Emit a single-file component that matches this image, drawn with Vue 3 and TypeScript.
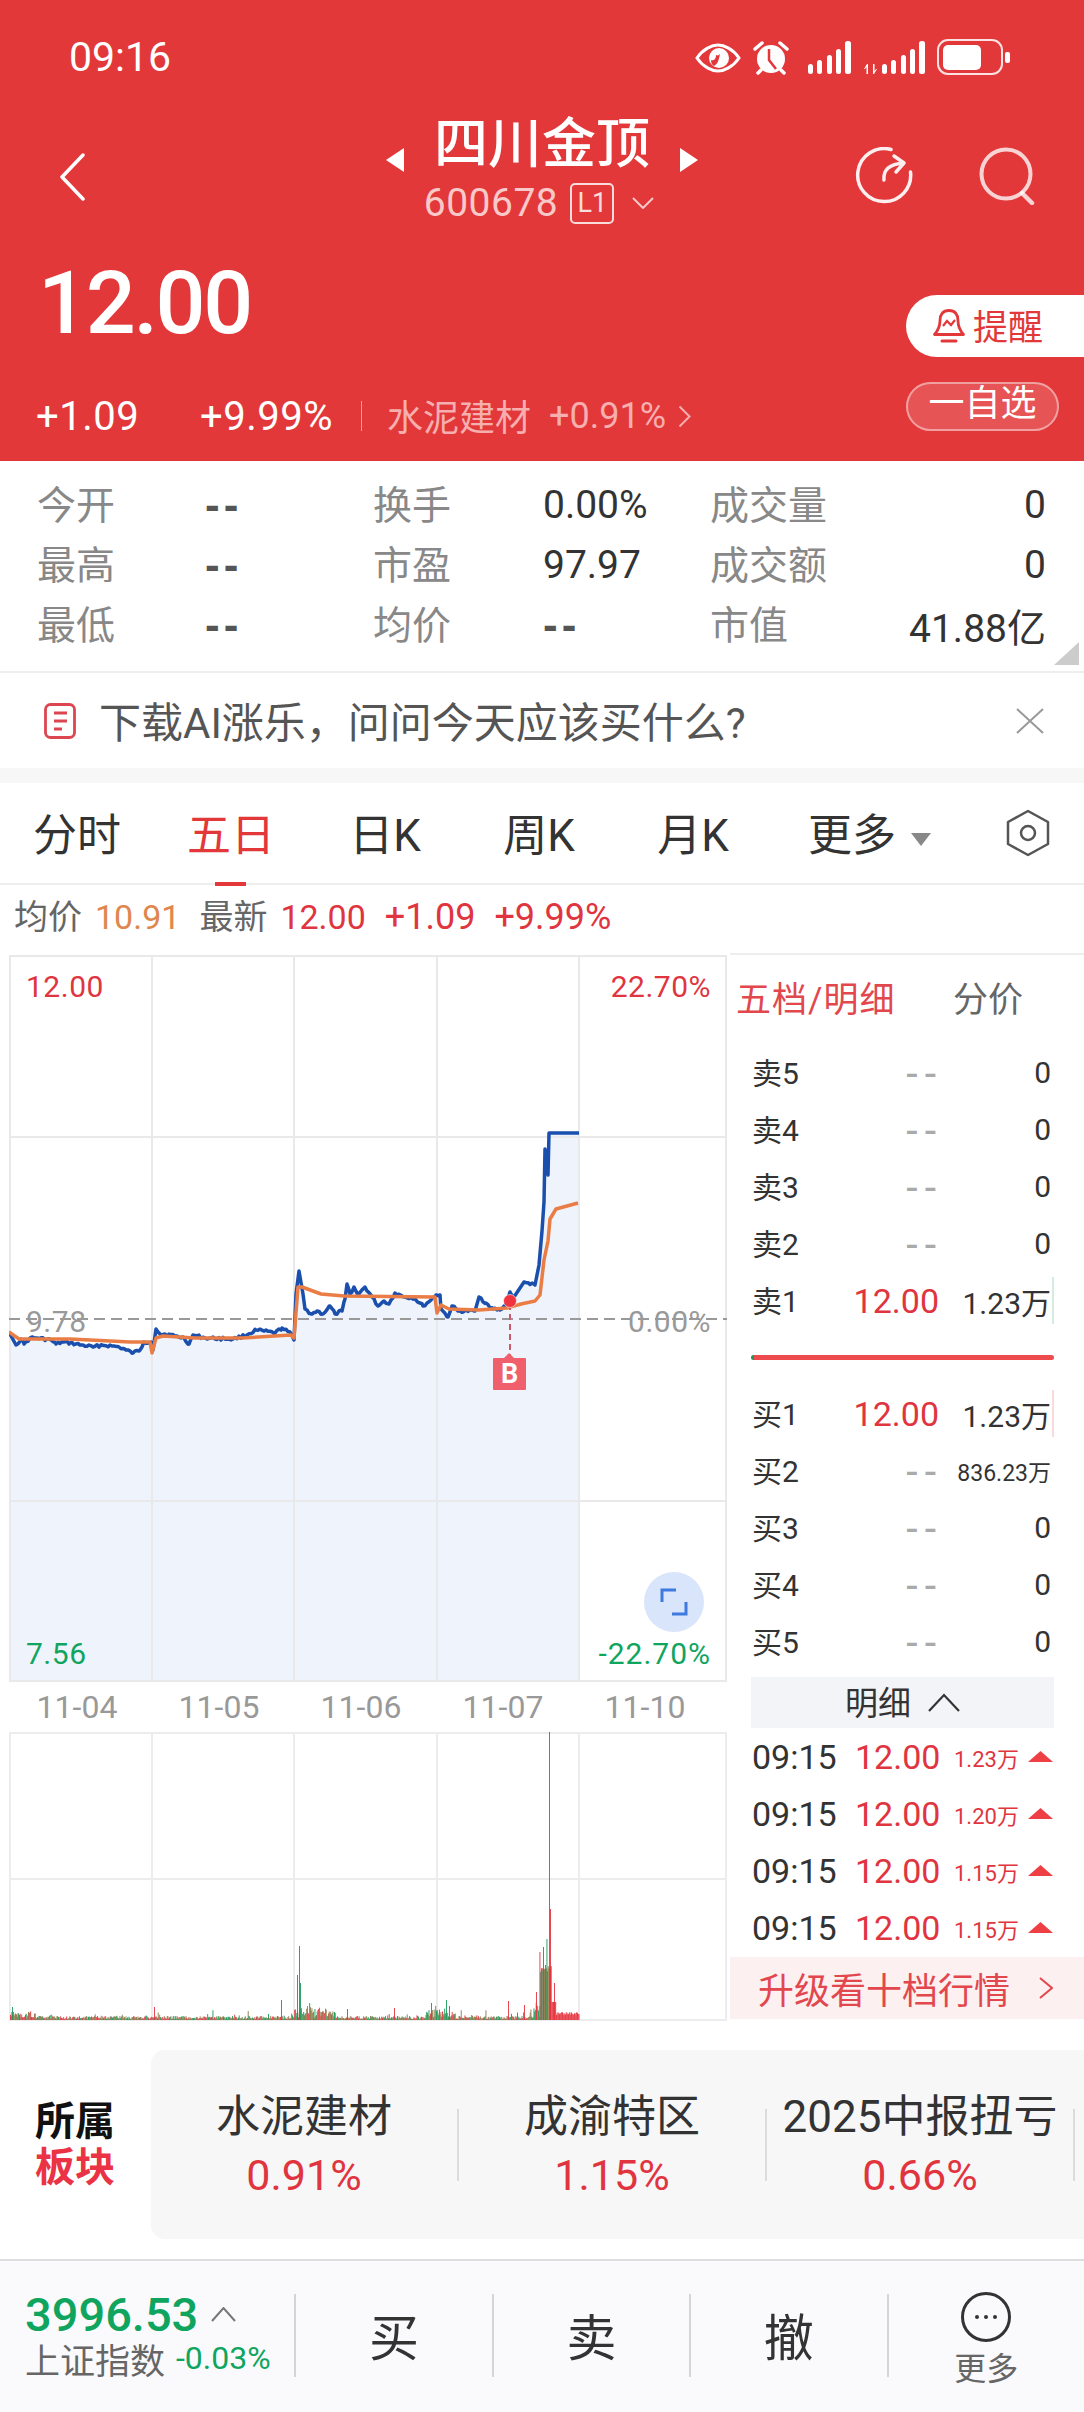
<script setup lang="ts">
interface Stat {
  label: string;
  value: string;
  dim?: boolean;
  right?: boolean;
}

interface Level {
  name: string;
  price: string;
  volume: string;
  small?: boolean;
}

interface Bar {
  x: number;
  h: number;
  color: string;
}

const stats: Stat[] = [
  { label: "今开", value: "--", dim: true },
  { label: "换手", value: "0.00%" },
  { label: "成交量", value: "0", right: true },
  { label: "最高", value: "--", dim: true },
  { label: "市盈", value: "97.97" },
  { label: "成交额", value: "0", right: true },
  { label: "最低", value: "--", dim: true },
  { label: "均价", value: "--", dim: true },
  { label: "市值", value: "41.88亿", right: true },
];

const asks: Level[] = [
  { name: "卖5", price: "--", volume: "0" },
  { name: "卖4", price: "--", volume: "0" },
  { name: "卖3", price: "--", volume: "0" },
  { name: "卖2", price: "--", volume: "0" },
  { name: "卖1", price: "12.00", volume: "1.23万" },
];

const bids: Level[] = [
  { name: "买1", price: "12.00", volume: "1.23万" },
  { name: "买2", price: "--", volume: "836.23万", small: true },
  { name: "买3", price: "--", volume: "0" },
  { name: "买4", price: "--", volume: "0" },
  { name: "买5", price: "--", volume: "0" },
];

const ticks = ["1.23万", "1.20万", "1.15万", "1.15万"];
const tabs = ["分时", "五日", "日K", "周K", "月K"];
const dates = ["11-04", "11-05", "11-06", "11-07", "11-10"];
const sectors = [
  { name: "水泥建材", pct: "0.91%" },
  { name: "成渝特区", pct: "1.15%" },
  { name: "2025中报扭亏", pct: "0.66%" },
];

// page coordinates, the svg viewBox starts at the chart's corner
const priceLine: number[][] = [
  [9, 1332], [16, 1345], [21, 1339], [24, 1344], [30, 1338], [37, 1338], [51, 1340], [56, 1344],
  [63, 1342], [70, 1343], [81, 1345], [93, 1347], [102, 1345], [112, 1346], [119, 1347], [126, 1350],
  [133, 1353], [140, 1350], [144, 1342], [151, 1342], [153, 1350], [156, 1329], [161, 1335], [165, 1334],
  [175, 1336], [184, 1338], [189, 1344], [193, 1335], [205, 1338], [233, 1339], [247, 1335], [256, 1330],
  [275, 1333], [282, 1328], [291, 1334], [294, 1340], [296, 1294], [299, 1271], [303, 1294], [305, 1309],
  [312, 1314], [317, 1311], [323, 1314], [330, 1306], [335, 1314], [342, 1311], [345, 1299], [347, 1284],
  [350, 1294], [354, 1287], [358, 1295], [365, 1287], [372, 1297], [378, 1306], [384, 1301], [389, 1304],
  [395, 1293], [405, 1297], [414, 1298], [423, 1306], [431, 1300], [436, 1295], [440, 1295], [441, 1309],
  [448, 1317], [452, 1306], [458, 1311], [475, 1311], [479, 1297], [486, 1303], [493, 1309], [500, 1310],
  [505, 1306], [510, 1292], [514, 1297], [524, 1282], [535, 1285], [539, 1265], [542, 1231], [544, 1202],
  [545, 1149], [548, 1175], [549, 1133], [579, 1133],
];

const avgLine: number[][] = [
  [9, 1332], [19, 1339], [70, 1339], [130, 1342], [150, 1342], [152, 1353], [156, 1338], [163, 1336],
  [195, 1338], [242, 1338], [291, 1335], [294, 1338], [298, 1287], [302, 1287], [321, 1294], [344, 1296],
  [435, 1297], [437, 1313], [441, 1305], [449, 1309], [479, 1310], [507, 1308], [521, 1304], [535, 1301],
  [540, 1295], [544, 1260], [548, 1241], [550, 1219], [556, 1209], [578, 1203],
];

let seed = 17;
const rand = () => {
  seed = (seed * 9301 + 49297) % 233280;
  return seed / 233280;
};

// the real line ticks every minute, so roughen the flat stretches
function roughen(pts: number[][]): number[][] {
  const out: number[][] = [];
  pts.forEach((p, i) => {
    const next = pts[i + 1];
    out.push(p);
    if (!next || p[0] >= 549 || Math.abs(next[1] - p[1]) > 12) return;
    for (let x = p[0] + 2; x < next[0]; x += 2) {
      const t = (x - p[0]) / (next[0] - p[0]);
      out.push([x, p[1] + (next[1] - p[1]) * t + (rand() - 0.5) * 3]);
    }
  });
  return out;
}

const toPoints = (pts: number[][]) => pts.map((p) => p.join(",")).join(" ");
const pricePoints = toPoints(roughen(priceLine));
const avgPoints = toPoints(avgLine);
const fillPoints = `${pricePoints} 579,1682 9,1682`;

const RED = "#e5343f";
const GREEN = "#1a9a58";
const OLIVE = "#8d7a48";

function volumeBars(): Bar[] {
  const bars: Bar[] = [];
  for (let x = 10; x < 579; x += 0.75) {
    let h = 1 + rand() * 3;
    if (rand() > 0.9) h += rand() * 6;
    if (x < 35) h += rand() * 6;
    if (x > 294 && x < 335) h += rand() * 10;
    if (x > 425 && x < 455) h += rand() * 9;
    if (x > 530 && x < 540) h += rand() * 14;
    if (x >= 540 && x < 551) h = 48 + rand() * 6;
    if (x >= 551 && x < 556) h = 18;
    if (x >= 556) h = 5 + rand() * 3;
    let color = x < 551 && rand() > 0.5 ? GREEN : RED;
    if (x >= 543 && x < 550) color = OLIVE;
    else if (x < 540 && rand() > 0.6) color = OLIVE;
    bars.push({ x, h, color });
  }
  const spikes: [number, number, string][] = [
    [12, 13, GREEN], [154, 13, RED], [281, 20, RED], [297, 45, RED], [299, 74, RED], [300, 37, GREEN],
    [347, 11, RED], [394, 12, RED], [431, 17, RED], [446, 20, GREEN], [449, 14, RED], [508, 19, RED],
    [524, 15, RED], [536, 28, RED], [539.5, 68, RED], [543, 73, RED], [545, 55, GREEN], [546.5, 81, GREEN],
    [549, 288, RED], [550, 111, RED], [554, 37, RED],
  ];
  for (const [x, h, color] of spikes) bars.push({ x, h, color });
  return bars;
}

const bars = volumeBars();
</script>

<template>
  <div class="page">
    <header class="head">
      <div class="status">
        <span class="clock">09:16</span>
        <svg class="status-icons" width="315" height="36" viewBox="695 37 315 36">
          <path d="M697 56c6-9 15-13 21-13s15 4 21 13c-6 9-15 13-21 13s-15-4-21-13z" fill="none" stroke="#fff" stroke-width="3" />
          <circle cx="719" cy="56" r="10" fill="#fff" />
          <path d="M711 58c3 1 5-1 5-5 2 1 3 0 4-1-1 5-2 10-6 12-2-1-3-3-3-6z" fill="#e2383a" />
          <circle cx="771" cy="57" r="14" fill="#fff" />
          <path d="M769 47v11l7 9" fill="none" stroke="#e2383a" stroke-width="2.5" />
          <path d="M755 47l7-6M787 47l-7-6M758 71l3-3M784 71l-3-3" stroke="#fff" stroke-width="3.5" stroke-linecap="round" />
          <g fill="#fff">
            <rect x="808" y="62" width="5" height="10" rx="2.5" />
            <rect x="817" y="58" width="5" height="14" rx="2.5" />
            <rect x="827" y="53" width="5" height="19" rx="2.5" />
            <rect x="836" y="47" width="5" height="25" rx="2.5" />
            <rect x="845" y="39" width="6" height="33" rx="2.5" />
            <path d="M864 67l3-5h1v10h-1.500v-7l-1.500 2zM873 62h1.500v7l1.500-2h1l-3 5h-1z" />
            <rect x="882" y="62" width="5" height="10" rx="2.500" />
            <rect x="891" y="58" width="5" height="14" rx="2.500" />
            <rect x="901" y="53" width="5" height="19" rx="2.500" />
            <rect x="910" y="47" width="5" height="25" rx="2.500" />
            <rect x="919" y="39" width="6" height="33" rx="2.500" />
            <rect x="943" y="43" width="38" height="25" rx="5" />
            <rect x="1005" y="50" width="5" height="11" rx="2" />
          </g>
          <rect x="938" y="38" width="64" height="34" rx="10" fill="none" stroke="#fff" stroke-opacity=".85" stroke-width="2" />
        </svg>
      </div>

      <div class="nav">
        <svg class="back" width="26" height="48" viewBox="0 0 26 48">
          <path d="M24 2L3 24l21 22" fill="none" stroke="#fff" stroke-width="3.500" stroke-linecap="round" stroke-linejoin="round" />
        </svg>
        <div class="nav-mid">
          <div class="title-row">
            <i class="tri tri-left"></i>
            <span class="title">四川金顶</span>
            <i class="tri tri-right"></i>
          </div>
          <div class="code-row">
            <span class="code">600678</span>
            <span class="level">L1</span>
            <svg width="22" height="12" viewBox="0 0 22 12">
              <path d="M1 1l10 10L21 1" fill="none" stroke="#f9c9c9" stroke-width="2" />
            </svg>
          </div>
        </div>
        <div class="nav-right">
          <svg width="58" height="58" viewBox="0 0 58 58">
            <path d="M36 2.500A26.500 26.500 0 1 0 55.500 25" fill="none" stroke="#fff" stroke-opacity=".92" stroke-width="3.500" stroke-linecap="round" />
            <path d="M29 33c-1-10 5-16 20-17M39 9l10 7-8 9" fill="none" stroke="#fff" stroke-opacity=".92" stroke-width="3.500" stroke-linecap="round" stroke-linejoin="round" />
          </svg>
          <svg width="56" height="58" viewBox="0 0 56 58">
            <circle cx="27" cy="27" r="24.500" fill="none" stroke="#fff" stroke-opacity=".78" stroke-width="4" />
            <path d="M43 46l10 10" stroke="#fff" stroke-opacity=".78" stroke-width="4.500" stroke-linecap="round" />
          </svg>
        </div>
      </div>

      <div class="quote">
        <div>
          <div class="price">12.00</div>
          <div class="change">
            <span class="chg-a">+1.09</span>
            <span class="chg-b">+9.99%</span>
            <i class="chg-sep"></i>
            <span class="chg-sector">水泥建材</span>
            <span class="chg-pct">+0.91%</span>
            <svg width="13" height="23" viewBox="0 0 13 23">
              <path d="M1.500 1.500l10 10-10 10" fill="none" stroke="#f6aeae" stroke-width="2" />
            </svg>
          </div>
        </div>
        <div class="pills">
          <div class="pill-remind">
            <svg width="34" height="36" viewBox="0 0 34 36">
              <path d="M17 2.500c-6 0-9 4-9 10 0 5-1 9-5.500 14h29c-4.500-5-5.500-9-5.500-14 0-6-3-10-9-10z" fill="none" stroke="#e2383a" stroke-width="2.800" stroke-linejoin="round" />
              <path d="M11 18l4-5 4 4 4-5" fill="none" stroke="#e2383a" stroke-width="2.200" />
              <path d="M10 33h14" stroke="#e2383a" stroke-width="3" stroke-linecap="round" />
            </svg>
            <span>提醒</span>
          </div>
          <div class="pill-add"><span>一自选</span></div>
        </div>
      </div>
    </header>

    <section class="stats">
      <template v-for="s in stats" :key="s.label">
        <span class="stat-label">{{ s.label }}</span>
        <span class="stat-value" :class="{ dash: s.dim, right: s.right }">{{ s.value }}</span>
      </template>
      <i class="corner"></i>
    </section>

    <section class="notice">
      <svg width="32" height="36" viewBox="0 0 32 36">
        <rect x="1.500" y="1.500" width="29" height="33" rx="5" fill="none" stroke="#dc4650" stroke-width="2.800" />
        <path d="M10 10h13M10 18h13M10 26h8" stroke="#dc4650" stroke-width="2.800" />
      </svg>
      <span class="notice-text">下载AI涨乐，问问今天应该买什么?</span>
      <svg width="28" height="26" viewBox="0 0 28 26">
        <path d="M1 1l26 24M27 1L1 25" stroke="#999" stroke-width="2" />
      </svg>
    </section>

    <div class="strip"></div>

    <nav class="tabs">
      <div class="tab-list">
        <span v-for="t in tabs" :key="t" class="tab" :class="{ active: t === '五日' }">{{ t }}</span>
        <span class="tab tab-more">更多<i class="more-tri"></i></span>
      </div>
      <svg class="hex" width="44" height="48" viewBox="0 0 44 48">
        <path d="M22 2l20 11v22L22 46 2 35V13z" fill="none" stroke="#555" stroke-width="2.500" stroke-linejoin="round" />
        <circle cx="22" cy="24" r="7" fill="none" stroke="#555" stroke-width="2.500" />
      </svg>
    </nav>

    <div class="legend">
      <span class="pair"><span class="grey">均价</span><span class="orange">10.91</span></span>
      <span class="pair"><span class="grey">最新</span><span class="red">12.00</span></span>
      <span class="red wide">+1.09</span>
      <span class="red wide">+9.99%</span>
    </div>

    <section class="market">
      <div class="charts">
        <div class="main-chart">
          <svg width="718" height="727" viewBox="9 955 718 727">
            <polygon :points="fillPoints" fill="#eff3fc" />
            <g stroke="#e9e9ec" stroke-width="2" fill="none">
              <rect x="10" y="956" width="716" height="725" />
              <path d="M152 955v727M294 955v727M437 955v727M579 955v727M9 1137h718M9 1501h718" />
            </g>
            <polyline :points="pricePoints" fill="none" stroke="#1a4fae" stroke-width="3.500" stroke-linejoin="round" />
            <polyline :points="avgPoints" fill="none" stroke="#ea7d45" stroke-width="3.500" stroke-linejoin="round" />
            <path d="M9 1319h718" stroke="#999" stroke-width="2" stroke-dasharray="11 6" />
            <path d="M510 1304v52" stroke="#c85a6c" stroke-width="2" stroke-dasharray="6 4" />
            <circle cx="510" cy="1301" r="6.500" fill="#f0343f" stroke="#fff" stroke-opacity=".6" />
          </svg>
          <span class="lab lab-tl red">12.00</span>
          <span class="lab lab-tr red">22.70%</span>
          <span class="lab lab-ml grey-l">9.78</span>
          <span class="lab lab-mr grey-l">0.00%</span>
          <span class="lab lab-bl green">7.56</span>
          <span class="lab lab-br green">-22.70%</span>
          <span class="marker">B</span>
          <div class="expand">
            <svg width="28" height="28" viewBox="0 0 28 28">
              <path d="M2 14V2h14M26 14v12H12" fill="none" stroke="#3f7ae0" stroke-width="3" />
            </svg>
          </div>
        </div>
        <div class="dates">
          <span v-for="d in dates" :key="d">{{ d }}</span>
        </div>
        <svg class="vol-chart" width="718" height="290" viewBox="9 1732 718 290">
          <g stroke="#ececee" stroke-width="2" fill="none">
            <path d="M9 1733h718M9 1879h718M9 2020h718M10 1732v289M152 1732v289M294 1732v289M437 1732v289M579 1732v289M726 1732v289" />
          </g>
          <rect v-for="(b, i) in bars" :key="i" :x="b.x" :y="2020 - b.h" width="0.9" :height="b.h" :fill="b.color" />
        </svg>
      </div>

      <aside class="book">
        <div class="book-tabs">
          <span class="book-on">五档/明细</span>
          <span class="book-off">分价</span>
        </div>
        <div v-for="l in asks" :key="l.name" class="level-row">
          <span class="lv-name">{{ l.name }}</span>
          <span class="lv-price" :class="{ none: l.price === '--' }">{{ l.price }}</span>
          <span class="lv-vol">{{ l.volume }}</span>
          <i v-if="l.name === '卖1'" class="edge edge-green"></i>
        </div>
        <div class="ratio"><i></i></div>
        <div v-for="l in bids" :key="l.name" class="level-row">
          <span class="lv-name">{{ l.name }}</span>
          <span class="lv-price" :class="{ none: l.price === '--' }">{{ l.price }}</span>
          <span class="lv-vol" :class="{ small: l.small }">{{ l.volume }}</span>
          <i v-if="l.name === '买1'" class="edge edge-red"></i>
        </div>
        <div class="detail-head">
          <span>明细</span>
          <svg width="32" height="19" viewBox="0 0 32 19">
            <path d="M1 18L16 2l15 16" fill="none" stroke="#333" stroke-width="2.200" />
          </svg>
        </div>
        <div v-for="(t, i) in ticks" :key="i" class="tick-row">
          <span class="tk-time">09:15</span>
          <span class="tk-price">12.00</span>
          <span class="tk-vol">{{ t }}</span>
          <i class="tk-up"></i>
        </div>
        <div class="upgrade">
          <span>升级看十档行情</span>
          <svg width="14" height="22" viewBox="0 0 14 22">
            <path d="M1 1l12 10L1 21" fill="none" stroke="#e2474e" stroke-width="2" />
          </svg>
        </div>
      </aside>
    </section>

    <section class="sectors">
      <div class="sector-title">
        <span>所属</span>
        <span class="sector-red">板块</span>
      </div>
      <div class="sector-card">
        <template v-for="s in sectors" :key="s.name">
          <div class="sector-cell">
            <span class="sector-name">{{ s.name }}</span>
            <span class="sector-pct">{{ s.pct }}</span>
          </div>
          <i class="sector-sep"></i>
        </template>
      </div>
    </section>

    <footer class="bottom">
      <div class="index">
        <div class="index-top">
          <span class="index-num">3996.53</span>
          <svg width="25" height="15" viewBox="0 0 25 15">
            <path d="M1 14L12.500 1 24 14" fill="none" stroke="#777" stroke-width="2" />
          </svg>
        </div>
        <div class="index-sub">
          <span class="index-name">上证指数</span>
          <span class="index-pct">-0.03%</span>
        </div>
      </div>
      <div class="action">买</div>
      <div class="action">卖</div>
      <div class="action">撤</div>
      <div class="action action-more">
        <svg width="50" height="50" viewBox="0 0 50 50">
          <circle cx="25" cy="25" r="23.500" fill="none" stroke="#333" stroke-width="3" />
          <circle cx="16" cy="25" r="2" fill="#333" />
          <circle cx="25" cy="25" r="2" fill="#333" />
          <circle cx="34" cy="25" r="2" fill="#333" />
        </svg>
        <span>更多</span>
      </div>
    </footer>
  </div>
</template>

<style>
html,
body {
  background: #fff;
}
</style>

<style scoped>
.page {
  width: 1084px;
  height: 2412px;
  overflow: hidden;
  background: #fff;
  font-family: Roboto, "Noto Sans CJK SC", sans-serif;
  color: #333;
}

.head {
  height: 461px;
  background: #e2383a;
  color: #fff;
}

.status {
  height: 114px;
  display: flex;
  align-items: center;
  padding: 0 74px 0 69px;
  justify-content: space-between;
}

.clock {
  font-size: 41px;
}

.nav {
  height: 114px;
  display: grid;
  grid-template-columns: 1fr auto 1fr;
  align-items: start;
}

.back {
  margin: 39px 0 0 59px;
}

.nav-mid {
  display: flex;
  flex-direction: column;
  align-items: center;
}

.title-row {
  display: flex;
  align-items: flex-start;
  height: 61px;
}

.title {
  font-size: 54px;
  font-weight: 500;
  line-height: 56px;
  margin: 3px 30px 0;
}

.tri {
  width: 0;
  height: 0;
  margin-top: 34px;
  border-top: 12px solid transparent;
  border-bottom: 12px solid transparent;
}

.tri-left {
  border-right: 18px solid #fff;
}

.tri-right {
  border-left: 18px solid #fff;
}

.code-row {
  display: flex;
  align-items: center;
  height: 44px;
  margin-top: 6px;
  margin-left: -6px;
}

.code {
  font-size: 39px;
  color: #f9c9c9;
  letter-spacing: 0.5px;
}

.level {
  width: 44px;
  height: 41px;
  box-sizing: border-box;
  border: 2px solid #fbdcdc;
  border-radius: 5px;
  margin: 0 18px 0 12px;
  font-size: 27px;
  line-height: 37px;
  text-align: center;
  color: #fbdcdc;
}

.nav-right {
  display: flex;
  justify-content: flex-end;
  gap: 66px;
  padding: 33px 49px 0 0;
}

.quote {
  height: 233px;
  display: flex;
  justify-content: space-between;
}

.price {
  font-size: 88px;
  font-weight: 500;
  letter-spacing: -2.300px;
  line-height: 100px;
  margin: 25px 0 0 38px;
}

.change {
  display: flex;
  align-items: center;
  height: 50px;
  margin: 38px 0 0 36px;
  font-size: 40px;
  letter-spacing: 0.5px;
}

.chg-a {
  width: 164px;
}

.chg-b {
  width: 161px;
}

.chg-sep {
  width: 1px;
  height: 30px;
  background: #f29e9e;
  margin-right: 25px;
}

.chg-sector {
  font-size: 36px;
  color: #f6aeae;
  margin: -3px 18px 0 0;
  letter-spacing: 0;
}

.chg-pct {
  font-size: 36px;
  color: #f6aeae;
  margin-right: 12px;
  letter-spacing: 0;
}

.pills {
  width: 178px;
  padding-top: 67px;
  display: flex;
  flex-direction: column;
  gap: 25px;
}

.pill-remind {
  height: 62px;
  background: #fff;
  border-radius: 31px 0 0 31px;
  display: flex;
  align-items: center;
  padding-left: 26px;
  gap: 7px;
  color: #e2383a;
  font-size: 35px;
}

.pill-remind span {
  margin-top: -3px;
}

.pill-add {
  width: 153px;
  height: 49px;
  box-sizing: border-box;
  border: 2px solid rgba(255, 255, 255, 0.45);
  background: rgba(255, 255, 255, 0.14);
  border-radius: 25px;
  font-size: 36px;
  line-height: 41px;
  text-align: center;
}

.stats {
  position: relative;
  height: 212px;
  box-sizing: border-box;
  padding: 13px 38px 0;
  border-bottom: 2px solid #eee;
  display: grid;
  grid-template-columns: 167px 169px 169px 168px 1fr 120px;
  grid-auto-rows: 60px;
  align-items: center;
}

.stat-label {
  color: #888;
  font-size: 39px;
  margin: 0 0 4px -1px;
  white-space: nowrap;
}

.stat-value {
  color: #333;
  font-size: 39px;
  margin-top: 2px;
}

.stat-value.dash {
  color: #555;
  font-family: "Liberation Sans", sans-serif;
  font-size: 44px;
  font-weight: 700;
  letter-spacing: 4px;
}

.stat-value.right {
  grid-column: 6;
  white-space: nowrap;
  justify-self: end;
}

.corner {
  position: absolute;
  right: 5px;
  bottom: 6px;
  width: 25px;
  height: 23px;
  background: #ccc;
  clip-path: polygon(100% 0, 100% 100%, 0 100%);
}

.notice {
  height: 95px;
  display: flex;
  align-items: center;
  padding: 0 40px 0 44px;
}

.notice-text {
  flex: 1;
  margin: -2px 0 0 23px;
  font-size: 42px;
  color: #555;
  white-space: nowrap;
}

.strip {
  height: 15px;
  background: #f7f7f7;
}

.tabs {
  height: 102px;
  box-sizing: border-box;
  display: flex;
  align-items: center;
  justify-content: space-between;
  padding-right: 34px;
  border-bottom: 2px solid #eee;
}

.tab-list {
  display: grid;
  grid-template-columns: repeat(5, 154px) auto;
  align-items: center;
  height: 100px;
}

.tab {
  position: relative;
  font-size: 44px;
  color: #333;
  text-align: center;
  white-space: nowrap;
  margin-top: -2px;
}

.tab.active {
  color: #e2383a;
}

.tab.active::after {
  content: "";
  position: absolute;
  left: 61px;
  bottom: -22px;
  width: 31px;
  height: 4px;
  background: #e2383a;
}

.tab-more {
  padding-left: 38px;
}

.more-tri {
  display: inline-block;
  vertical-align: middle;
  margin-left: 15px;
  width: 0;
  height: 0;
  border-left: 10px solid transparent;
  border-right: 10px solid transparent;
  border-top: 13px solid #888;
}

.legend {
  height: 65px;
  display: flex;
  align-items: baseline;
  gap: 19px;
  padding-left: 14px;
  font-size: 34px;
  line-height: 65px;
}

.pair {
  display: flex;
  align-items: baseline;
  gap: 13px;
}

.wide {
  font-size: 36px;
}

.grey {
  color: #666;
}

.orange {
  color: #e0874e;
}

.red {
  color: #e0353f;
}

.green {
  color: #0fa55f;
}

.grey-l {
  color: #999;
}

.market {
  height: 1071px;
  display: flex;
}

.charts {
  width: 730px;
  padding: 5px 0 0 9px;
  box-sizing: border-box;
}

.main-chart {
  position: relative;
  width: 718px;
  height: 727px;
}

.main-chart svg,
.vol-chart {
  display: block;
}

.lab {
  position: absolute;
  font-size: 30px;
  line-height: 36px;
  letter-spacing: 0.5px;
}

.lab-tl {
  left: 17px;
  top: 14px;
}

.lab-tr {
  right: 16px;
  top: 14px;
}

.lab-ml {
  left: 17px;
  top: 349px;
}

.lab-mr {
  right: 16px;
  top: 349px;
}

.lab-bl {
  left: 17px;
  bottom: 10px;
}

.lab-br {
  right: 16px;
  bottom: 10px;
  letter-spacing: 1px;
}

.marker {
  position: absolute;
  left: 484px;
  top: 403px;
  width: 33px;
  height: 32px;
  background: #ef5f6c;
  color: #fff;
  font-size: 27px;
  font-weight: 700;
  line-height: 32px;
  text-align: center;
  border-radius: 1px;
}

.marker::before {
  content: "";
  position: absolute;
  left: 11px;
  top: -5px;
  border-left: 5px solid transparent;
  border-right: 5px solid transparent;
  border-bottom: 5px solid #ef5f6c;
}

.expand {
  position: absolute;
  left: 635px;
  top: 617px;
  width: 60px;
  height: 60px;
  border-radius: 50%;
  background: #d9e5fa;
  display: flex;
  align-items: center;
  justify-content: center;
}

.dates {
  height: 50px;
  display: grid;
  grid-template-columns: repeat(5, 142px);
  align-items: center;
  text-align: center;
  font-size: 32px;
  color: #999;
  margin-left: -3px;
}

.book {
  width: 354px;
  box-sizing: border-box;
  border-top: 2px solid #eee;
  margin-top: 3px;
  padding: 0 30px 0 21px;
}

.book-tabs {
  height: 89px;
  box-sizing: border-box;
  display: flex;
  align-items: center;
  margin-left: -15px;
  font-size: 35px;
  padding-bottom: 7px;
}

.book-on {
  color: #e2474e;
  letter-spacing: 1px;
  width: 217px;
  white-space: nowrap;
}

.book-off {
  color: #666;
}

.level-row {
  position: relative;
  height: 57px;
  display: grid;
  grid-template-columns: 187px 112px;
  align-items: center;
  padding-left: 1px;
  font-size: 30px;
}

.lv-name {
  grid-row: 1;
  grid-column: 1;
  margin-bottom: 4px;
}

.lv-price {
  grid-row: 1;
  grid-column: 1;
  justify-self: end;
  font-size: 34px;
  color: #e0353f;
}

.lv-price.none {
  font-family: "Liberation Sans", sans-serif;
  font-size: 40px;
  letter-spacing: 5px;
  margin-right: -3px;
  color: #aaa;
}

.lv-vol {
  grid-row: 1;
  grid-column: 2;
  justify-self: end;
  white-space: nowrap;
}

.lv-vol.small {
  font-size: 23px;
}

.edge {
  position: absolute;
  right: 0;
  top: 5px;
  width: 2px;
  height: 47px;
}

.edge-green {
  background: #d4ebe0;
}

.edge-red {
  background: #fadadd;
}

.ratio {
  height: 56px;
  display: flex;
  align-items: center;
}

.ratio i {
  display: block;
  width: 100%;
  height: 5px;
  border-radius: 3px;
  background: linear-gradient(90deg, #1a9a58 3px, #ee4b4f 3px);
}

.detail-head {
  height: 51px;
  margin-top: 7px;
  background: #f3f4f7;
  display: flex;
  align-items: center;
  justify-content: center;
  gap: 17px;
  font-size: 33px;
}

.detail-head span {
  margin-top: -3px;
}

.tick-row {
  height: 57px;
  display: flex;
  align-items: center;
  padding-left: 1px;
}

.tk-time {
  width: 103px;
  font-size: 34px;
}

.tk-price {
  width: 99px;
  font-size: 34px;
  color: #e0353f;
}

.tk-vol {
  width: 74px;
  font-size: 22px;
  color: #e0353f;
  white-space: nowrap;
}

.tk-up {
  width: 25px;
  height: 11px;
  background: #ee3f45;
  clip-path: polygon(50% 0, 100% 100%, 0 100%);
}

.upgrade {
  height: 62px;
  margin: 1px -30px 0 -21px;
  padding: 0 31px 0 28px;
  background: #fdf0f0;
  display: flex;
  align-items: center;
  justify-content: space-between;
  font-size: 36px;
  color: #e2474e;
}

.sectors {
  height: 240px;
  display: flex;
  align-items: flex-start;
  padding-top: 29px;
  box-sizing: border-box;
  border-bottom: 2px solid #ddd;
}

.sector-title {
  width: 151px;
  height: 189px;
  box-sizing: border-box;
  padding-left: 35px;
  display: flex;
  flex-direction: column;
  justify-content: center;
  font-size: 40px;
  font-weight: 700;
  line-height: 46px;
  color: #111;
}

.sector-red {
  color: #ea3344;
}

.sector-card {
  flex: 1;
  height: 189px;
  background: #f7f7f8;
  border-radius: 14px 0 0 14px;
  display: flex;
  align-items: center;
}

.sector-cell {
  width: 306px;
  flex: none;
  display: flex;
  flex-direction: column;
  align-items: center;
  gap: 4px;
  padding-top: 2px;
}

.sector-name {
  font-size: 44px;
  line-height: 54px;
  color: #333;
  white-space: nowrap;
}

.sector-pct {
  font-size: 43px;
  line-height: 54px;
  color: #e0353f;
}

.sector-sep {
  flex: none;
  width: 2px;
  height: 72px;
  background: #dcdcdc;
}

.bottom {
  height: 151px;
  display: flex;
  align-items: flex-start;
  padding-top: 33px;
  box-sizing: border-box;
  background: #fafafc;
}

.index {
  width: 295px;
  padding-left: 25px;
  box-sizing: border-box;
  height: 83px;
}

.index-top {
  display: flex;
  align-items: center;
  gap: 13px;
  height: 43px;
  margin-top: -1px;
}

.index-num {
  font-size: 47px;
  color: #0fa55f;
  font-weight: 500;
}

.index-sub {
  display: flex;
  align-items: center;
  gap: 11px;
  height: 44px;
}

.index-name {
  font-size: 35px;
  color: #666;
}

.index-pct {
  font-size: 32px;
  color: #0fa55f;
}

.action {
  width: 198px;
  height: 83px;
  box-sizing: border-box;
  border-left: 2px solid #d5d5d8;
  display: flex;
  flex-direction: column;
  align-items: center;
  justify-content: center;
  font-size: 50px;
  color: #333;
  padding-bottom: 3px;
}

.action-more {
  justify-content: flex-start;
  font-size: 32px;
  color: #666;
  line-height: 38px;
  gap: 8px;
}

.action-more svg {
  flex: none;
  margin-top: -2px;
}
</style>
